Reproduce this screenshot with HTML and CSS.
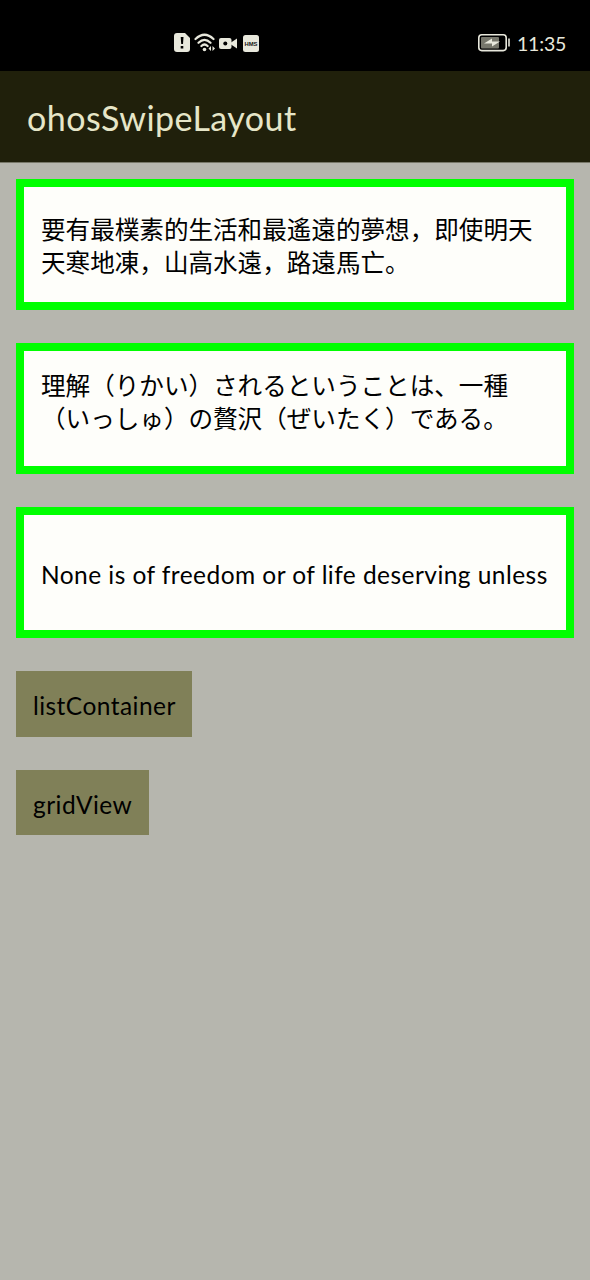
FILE: index.html
```html
<!DOCTYPE html>
<html lang="en">
<head>
<meta charset="utf-8">
<title>ohosSwipeLayout</title>
<link rel="stylesheet" href="styles.css">
</head>
<body>
<div class="status">
  <svg class="status-icons" width="88" height="22" viewBox="0 0 88 22">
    <path class="fill" d="M4 1h8l5 5v11q0 3-3 3H4q-3 0-3-3V4q0-3 3-3z"/>
    <path class="ink" d="M7.700 5h2.800l-.5 7H8.200zM7.700 14h2.600v2.600H7.700z"/>
    <path class="line" d="M22.500 7Q31.500-1.500 40.500 7M25.500 10.800Q31.500 5 37.500 10.800M28.400 14Q31.500 11 34.600 14"/>
    <circle class="fill" cx="31.500" cy="17.500" r="1.800"/>
    <path class="fill" d="M38 14v5l-2.500-2.500zM39.500 14v5l2.500-2.500z"/>
    <rect class="fill" x="46" y="6" width="12.500" height="11" rx="2"/>
    <path class="fill" d="M58 10.500l6-4v10l-6-4z"/>
    <circle class="ink" cx="52.300" cy="11.500" r="2"/>
    <rect class="fill" x="70" y="3" width="16" height="17" rx="2.500"/>
    <text class="hms" x="78" y="13.800" text-anchor="middle" textLength="13" lengthAdjust="spacingAndGlyphs">HMS</text>
  </svg>
  <svg class="battery" width="34" height="19" viewBox="0 0 34 19">
    <rect class="case" x="1.800" y="1.800" width="27.400" height="15.800" rx="3"/>
    <rect class="charge" x="4" y="4" width="18" height="11.400" rx="1"/>
    <path class="fill" d="M7 10.500l8-5v3h8l-8 5v-3z"/>
    <path class="fill" d="M31.200 5.500h1.600v8h-1.600z"/>
  </svg>
  <span class="clock">11:35</span>
</div>
<header class="bar"><h1 class="title">ohosSwipeLayout</h1></header>
<main class="page">
  <section class="card"><p class="cjk" lang="zh">要有最樸素的生活和最遙遠的夢想，即使明天<br>天寒地凍，山高水遠，路遠馬亡。</p></section>
  <section class="card top"><p class="cjk ja" lang="ja">理解（りかい）されるということは、一種<br>（いっしゅ）の贅沢（ぜいたく）である。</p></section>
  <section class="card single"><p class="latin">None is of freedom or of life deserving unless</p></section>
  <button class="action list"><span>listContainer</span></button>
  <button class="action grid"><span>gridView</span></button>
</main>
</body>
</html>
```
FILE: styles.css
```css
* { box-sizing: border-box; }
body {
  margin: 0;
  min-height: 1280px;
  background: #b6b6ae;
  color: #000;
  font-family: Lato, "Noto Sans CJK SC", sans-serif;
}
.status {
  display: flex;
  height: 71px;
  padding: 32px 0 0 173px;
  background: #000;
}
.status-icons { flex: none; }
.battery { margin: 1px 0 0 216px; flex: none; }
.fill { fill: #e8e8dc; }
.ink { fill: #000; }
.line { fill: none; stroke: #e8e8dc; stroke-width: 2.2; stroke-linecap: round; }
.case { fill: none; stroke: #e8e8dc; stroke-width: 1.6; }
.charge { fill: #77776c; }
.hms { font: 700 5.5px "Liberation Sans", sans-serif; fill: #111; }
.clock {
  margin-left: 6px;
  color: #e8e8dc;
  font-size: 19.5px;
  line-height: 23px;
  letter-spacing: -0.2px;
}
.bar {
  display: flex;
  align-items: center;
  height: 92px;
  padding: 3px 0 0 27px;
  background: #20200b;
  border-bottom: 1px solid #777768;
}
.title {
  margin: 0;
  color: #e6e6c8;
  font-size: 34px;
  font-weight: 400;
  line-height: 42px;
  letter-spacing: 0.45px;
  white-space: nowrap;
}
.page {
  display: flex;
  flex-direction: column;
  align-items: flex-start;
  gap: 33px;
  padding: 16px 16px 0;
}
.card {
  display: flex;
  align-items: center;
  width: 558px;
  height: 131px;
  padding: 0 0 0 17px;
  background: #fefefa;
  border: 8px solid #0f0;
}
.card.top { align-items: flex-start; padding-top: 17px; }
.card.single { padding-top: 4px; }
.card p { margin: 0; white-space: nowrap; }
.cjk {
  font-family: "Noto Sans CJK SC", sans-serif;
  font-size: 24.58px;
  line-height: 33px;
}
.ja { font-family: "Noto Sans CJK JP", sans-serif; }
.latin { font-size: 24.5px; line-height: 33px; letter-spacing: 0.45px; }
.action {
  height: 66px;
  padding: 3px 0 0 17px;
  border: 0;
  border-radius: 0;
  background: #808058;
  color: #000;
  font-family: Lato, sans-serif;
  font-size: 24.5px;
  text-align: left;
  letter-spacing: 0.45px;
}
.list { width: 176px; }
.grid { width: 133px; height: 65px; }
```
